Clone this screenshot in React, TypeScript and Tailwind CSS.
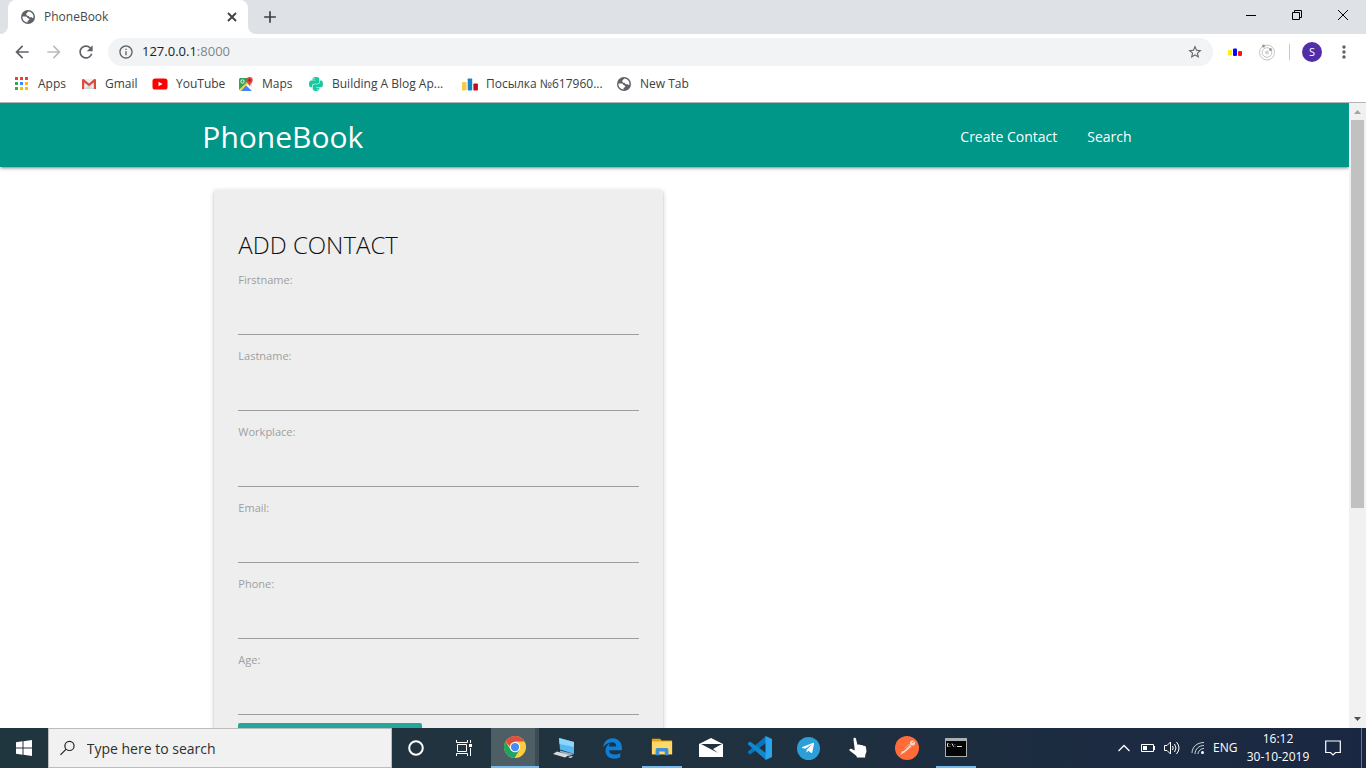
import React from "react";
import type { ReactNode } from "react";
import { FaPython, FaTelegramPlane, FaEdgeLegacy } from "react-icons/fa";
import { MdRefresh, MdArrowBack, MdArrowForward, MdStarBorder, MdInfoOutline, MdAdd, MdMoreVert } from "react-icons/md";

function Globe() {
  return (
    <svg viewBox="0 0 16 16" className="size-4 shrink-0" aria-hidden="true">
      <circle cx="8" cy="8" r="7" fill="#5f6368" />
      <path d="M8.300 2.600C7.600 3.600 6.300 4 6.300 5.300c0 1.200 1 1.500 1.900 1.500.9.100.7 1.500 1.700 1.500h1.300c.9 0 .9 1.100 2.200.6.5-3.500-1.900-6.100-5.100-6.300z" fill="#fff" />
      <path d="M2.500 7.600h3.300c1.500 0 1.200 1.800 2.600 1.900 1.200.1 1.100 1.300.4 1.700-.8.4-1.300.6-1.300 1.400v.9C4.300 13.300 2.200 10.900 2.500 7.600z" fill="#fff" />
    </svg>
  );
}

function AppsIcon() {
  const colors = ["#ea4335", "#ea4335", "#ea4335", "#34a853", "#4285f4", "#fbbc05", "#34a853", "#fbbc05", "#fbbc05"];
  return (
    <svg viewBox="0 0 16 16" className="size-4 shrink-0" aria-hidden="true">
      {colors.map((c, i) => (
        <rect key={i} x={1 + (i % 3) * 5} y={1 + Math.floor(i / 3) * 5} width="3" height="3" fill={c} />
      ))}
    </svg>
  );
}

function GmailIcon() {
  return (
    <svg viewBox="0 0 16 16" className="size-4 shrink-0" aria-hidden="true">
      <path d="M2 3h12v10H2z" fill="#eceff1" />
      <path d="M3.500 13 8 9l4.500 4z" fill="#d5d9dc" />
      <path d="M1 4.200C1 3 2.200 2.700 3 3.300l5 4.200 5-4.200c.8-.6 2-.3 2 .9V13h-2.200V6.400L8 10.300 3.200 6.400V13H1z" fill="#dd4b3e" />
    </svg>
  );
}

function YouTubeIcon() {
  return (
    <svg viewBox="0 0 16 16" className="size-4 shrink-0" aria-hidden="true">
      <rect x="0.500" y="2.500" width="15" height="11" rx="2.600" fill="#f00" />
      <path d="M6.500 5.700v4.600l4-2.300z" fill="#fff" />
    </svg>
  );
}

function MapsIcon() {
  return (
    <svg viewBox="0 0 16 16" className="size-4 shrink-0" aria-hidden="true">
      <rect x="1" y="2" width="13" height="13" rx="1.500" fill="#dfe3e6" />
      <path d="M1 3.500Q1 2 2.500 2H9v5L1 14z" fill="#34a05a" />
      <path d="M1 14 9.500 5.500l1.500 1.500L3 15z" fill="#fdd243" />
      <path d="M3 15l5-5.500L14 15z" fill="#4285f4" />
      <path d="M10.500 8.500 14 12v2.500L8 9z" fill="#fff" />
      <circle cx="4.500" cy="5.500" r="1.700" fill="none" stroke="#fff" strokeWidth="0.900" />
      <path d="M11.500 10.500c-.2-2.200-3-3.600-3-6.300a3 3.200 0 0 1 6.200 0c0 2.700-3 4.100-3.200 6.300z" fill="#ea4335" />
      <circle cx="11.600" cy="4.200" r="1.100" fill="#8c2219" />
    </svg>
  );
}

function BarsIcon({ small = false }: { small?: boolean }) {
  return small ? (
    <svg viewBox="0 0 16 16" className="size-4" aria-hidden="true">
      <rect x="1" y="6" width="4" height="5.500" rx="1" fill="#fff000" />
      <rect x="6" y="4.500" width="4" height="7.500" rx="1" fill="#0808ff" />
      <rect x="11" y="7" width="4" height="5" rx="1" fill="#ff1414" />
    </svg>
  ) : (
    <svg viewBox="0 0 16 16" className="size-4 shrink-0" aria-hidden="true">
      <rect x="0" y="6" width="4.500" height="8.500" rx="0.800" fill="#f9c846" />
      <rect x="5.700" y="2.500" width="4.500" height="12" rx="0.800" fill="#1483cc" />
      <rect x="11.400" y="7.500" width="4.500" height="7" rx="0.800" fill="#c00d1e" />
    </svg>
  );
}

function OrbitIcon() {
  return (
    <svg viewBox="0 0 18 18" className="size-[18px]" aria-hidden="true" fill="none" stroke="#c4c4c4">
      <circle cx="9" cy="9.500" r="7.500" />
      <circle cx="9" cy="9.500" r="4.800" />
      <circle cx="9" cy="9.500" r="2" fill="#d4d4d4" stroke="none" />
      <circle cx="5.500" cy="3" r="1.500" fill="#999" stroke="none" />
      <circle cx="12.500" cy="6.500" r="1.500" fill="#999" stroke="none" />
    </svg>
  );
}

function TabStrip() {
  return (
    <header className="flex h-[34px] shrink-0 items-stretch bg-[#dee1e6] pl-2">
      <div className="relative flex w-60 items-center rounded-t-lg bg-white pr-2 pl-3">
        <svg viewBox="0 0 8 8" className="absolute bottom-0 -left-2 size-2" aria-hidden="true">
          <path d="M8 0v8H0a8 8 0 0 0 8-8z" fill="#fff" />
        </svg>
        <svg viewBox="0 0 8 8" className="absolute -right-2 bottom-0 size-2" aria-hidden="true">
          <path d="M0 0v8h8a8 8 0 0 1-8-8z" fill="#fff" />
        </svg>
        <Globe />
        <span className="ml-2 flex-1 text-[12px] text-[#45494d]">PhoneBook</span>
        <button aria-label="Close tab">
          <svg viewBox="0 0 16 16" className="size-4" fill="none" stroke="#3c4043" strokeWidth="1.800">
            <path d="m4 4 8 8M12 4l-8 8" />
          </svg>
        </button>
      </div>
      <button aria-label="New tab" className="ml-3 text-[#3c4043]">
        <MdAdd className="size-5" />
      </button>
      <div className="ml-auto flex items-center pb-1">
        <button aria-label="Minimize" className="flex w-[46px] justify-center">
          <svg viewBox="0 0 10 10" className="size-2.5"><path d="M0 5.500h10" stroke="#000" /></svg>
        </button>
        <button aria-label="Restore" className="flex w-[46px] justify-center">
          <svg viewBox="0 0 10 10" className="size-2.5" fill="none" stroke="#000">
            <path d="M.5 2.500h7v7h-7zM2.500 2.500v-2h7v7h-2" />
          </svg>
        </button>
        <button aria-label="Close window" className="flex w-[46px] justify-center">
          <svg viewBox="0 0 10 10" className="size-2.5"><path d="M0 0l10 10M10 0 0 10" stroke="#000" /></svg>
        </button>
      </div>
    </header>
  );
}

function Toolbar() {
  return (
    <div className="flex h-9 shrink-0 items-center bg-white pr-3 pl-3 text-[#5f6368]">
      <button aria-label="Back"><MdArrowBack className="size-5" /></button>
      <button aria-label="Forward" className="ml-3 text-[#babcbe]"><MdArrowForward className="size-5" /></button>
      <button aria-label="Reload" className="ml-3"><MdRefresh className="size-5" /></button>
      <div className="ml-3 flex h-7 flex-1 items-center rounded-full bg-[#f1f3f4] pr-2.5 pl-2.5">
        <MdInfoOutline className="size-4" />
        <a href="http://127.0.0.1:8000" className="ml-2 flex-1 text-[13px] text-[#202124]">
          127.0.0.1<span className="text-[#80868b]">:8000</span>
        </a>
        <button aria-label="Bookmark this page"><MdStarBorder className="size-4" /></button>
      </div>
      <div className="flex items-center pl-3.5">
        <button aria-label="Analytics extension"><BarsIcon small /></button>
        <button aria-label="Orbit extension" className="ml-[15px]"><OrbitIcon /></button>
        <span className="ml-[13px] h-4 w-px bg-[#c6c8ca]" />
        <button aria-label="Profile" className="ml-3 flex size-5 items-center justify-center rounded-full bg-[#512da8] text-[11px] text-white">
          S
        </button>
        <button aria-label="Menu" className="ml-3"><MdMoreVert className="size-5" /></button>
      </div>
    </div>
  );
}

function Bookmark({ icon, label, className }: { icon: ReactNode; label: string; className: string }) {
  return (
    <a href="#" className={`flex items-center gap-2 whitespace-nowrap ${className}`}>
      {icon}
      <span>{label}</span>
    </a>
  );
}

function BookmarksBar() {
  return (
    <nav aria-label="Bookmarks" className="flex h-[33px] shrink-0 items-center border-b border-[#b6b4b6] bg-white pb-1 pl-3.5 text-[12px] text-[#3c4043]">
      <Bookmark className="w-[67px]" icon={<AppsIcon />} label="Apps" />
      <Bookmark className="w-[71px]" icon={<GmailIcon />} label="Gmail" />
      <Bookmark className="w-[86px]" icon={<YouTubeIcon />} label="YouTube" />
      <Bookmark className="w-[70px]" icon={<MapsIcon />} label="Maps" />
      <Bookmark className="w-[154px]" icon={<FaPython className="size-4 shrink-0 text-[#19c8a0]" />} label="Building A Blog Ap..." />
      <Bookmark className="w-[154px]" icon={<BarsIcon />} label="Посылка №617960..." />
      <Bookmark className="w-24" icon={<Globe />} label="New Tab" />
    </nav>
  );
}

const fields = [
  { id: "firstname", label: "Firstname:", type: "text" },
  { id: "lastname", label: "Lastname:", type: "text" },
  { id: "workplace", label: "Workplace:", type: "text" },
  { id: "email", label: "Email:", type: "email" },
  { id: "phone", label: "Phone:", type: "tel" },
  { id: "age", label: "Age:", type: "text" },
];

function Page() {
  return (
    <div className="min-w-0 flex-1 overflow-hidden bg-white">
      <nav className="h-16 bg-[#009688] text-white shadow-[0_2px_2px_0_rgba(0,0,0,0.14),0_3px_1px_-2px_rgba(0,0,0,0.12),0_1px_5px_0_rgba(0,0,0,0.2)]">
        <div className="mx-auto flex h-full w-[70%] items-center justify-between pt-0.5">
          <a href="#" className="text-[30px]">PhoneBook</a>
          <div className="flex text-[14px] font-medium">
            <a href="#" className="px-[15px]">Create Contact</a>
            <a href="#" className="px-[15px]">Search</a>
          </div>
        </div>
      </nav>
      <main className="mx-auto w-[70%] px-3 pt-[23px]">
        <form className="w-[449px] rounded-xs bg-[#eee] p-6 shadow-[0_2px_2px_0_rgba(0,0,0,0.14),0_3px_1px_-2px_rgba(0,0,0,0.12),0_1px_5px_0_rgba(0,0,0,0.2)]">
          <h1 className="mt-4 mb-3 text-[24px] leading-[29px] font-[350] text-[#101010]">ADD CONTACT</h1>
          {fields.map((f) => (
            <div key={f.id} className="mb-3 flex flex-col last-of-type:mb-2">
              <label htmlFor={f.id} className="text-[11px] leading-[18px] text-[#9e9e9e]">{f.label}</label>
              <input id={f.id} type={f.type} className="h-[46px] border-b border-[#9e9e9e] bg-transparent text-[16px] outline-none" />
            </div>
          ))}
          <button type="submit" aria-label="Submit" className="block h-9 w-[184px] rounded-xs bg-[#26a69a] shadow-md" />
        </form>
      </main>
    </div>
  );
}

function Scrollbar() {
  return (
    <div aria-hidden="true" className="flex w-[17px] shrink-0 flex-col items-center bg-[#f1f1f1]">
      <svg viewBox="0 0 17 17" className="size-[17px] shrink-0"><path d="M5 11h7L8.500 7z" fill="#a3a3a3" /></svg>
      <div className="h-[388px] w-[13px] bg-[#c1c1c1]" />
      <svg viewBox="0 0 17 17" className="mt-auto size-[17px] shrink-0"><path d="M5 6h7l-3.500 4z" fill="#505050" /></svg>
    </div>
  );
}

function TaskButton({ label, children, width = "w-[49px]", state = "" }: { label: string; children: ReactNode; width?: string; state?: string }) {
  return (
    <button aria-label={label} className={`flex h-10 items-center justify-center ${width}`}>
      <span className={`flex h-full items-center justify-center ${state || "w-10"}`}>{children}</span>
    </button>
  );
}

function Taskbar() {
  return (
    <footer className="flex h-10 shrink-0 items-center bg-linear-to-r from-[#20363e] via-[#20323f] to-[#1a2742] text-white">
      <button aria-label="Start" className="flex h-full w-12 items-center justify-center">
        <svg viewBox="0 0 16 16" className="size-4" fill="#fff">
          <path d="M0 2.200 6.500 1.300V7.500H0zM7.500 1.200 16 0v7.500H7.500zM0 8.500h6.500v6.200L0 13.800zM7.500 8.500H16V16l-8.500-1.200z" />
        </svg>
      </button>
      <label className="flex h-full w-[344px] items-center border border-[#bcbcbc] bg-[#f1f1f1] pl-[11px] text-[#222]">
        <svg viewBox="0 0 16 16" className="size-4" fill="none" stroke="#222" strokeWidth="1.300" aria-hidden="true">
          <circle cx="10.300" cy="5.700" r="5" />
          <path d="M6.700 9.300.5 15.500" />
        </svg>
        <input aria-label="Search Windows" placeholder="Type here to search" className="ml-3 w-full bg-transparent text-[14px] outline-none placeholder:text-[#2f2f2f]" />
      </label>
      <div className="flex">
        <TaskButton label="Cortana" width="w-12">
          <svg viewBox="0 0 18 18" className="size-[18px]"><circle cx="9" cy="9" r="6.800" fill="none" stroke="#fff" strokeWidth="2" /></svg>
        </TaskButton>
        <TaskButton label="Task view" width="w-12">
          <svg viewBox="0 0 18 18" className="size-[18px]" fill="none" stroke="#fff">
            <path d="M2.500 5.500h9v7h-9zM1.500 1v2.500h11V1M1.500 17v-2.500h11V17M15.500 1v3M15.500 9v8" />
            <path d="M14 5h3v3h-3z" fill="#fff" stroke="none" />
          </svg>
        </TaskButton>
        <TaskButton label="Chrome" width="w-[51px] pl-[3px]" state="w-12 border-b-2 border-[#76b9ed] bg-[#4d5e65] bg-linear-to-r from-[#4d5e65] from-92% to-[#3c4c55] to-92%">
          <svg viewBox="0 0 24 24" className="size-[22px]">
            <circle cx="12" cy="12" r="12" fill="#ffcd40" />
            <path d="M1.600 6A12 12 0 0 1 22.400 6H12l-5 6z" fill="#de4f42" />
            <path d="M1.600 6A12 12 0 0 0 11.500 24L17 15H7z" fill="#1fa362" />
            <circle cx="12" cy="12" r="5.600" fill="#fff" />
            <circle cx="12" cy="12" r="4.500" fill="#4b8bf5" />
          </svg>
        </TaskButton>
        <TaskButton label="Remote desktop">
          <svg viewBox="0 0 24 24" className="size-6">
            <path d="m7 2 15 4v12L8 13.500z" fill="#53b9f0" />
            <path d="m7 2 15 4v5L7.500 8z" fill="#8dd5fa" />
            <path d="M8 14.500 22 18l-5 2-9-4z" fill="#9aaab4" />
            <path d="M5 15.500 17 19l-4 2.500L1 18z" fill="#d6dce0" />
            <path d="m16 21 4-1 1 1-3 1z" fill="#d6dce0" />
          </svg>
        </TaskButton>
        <TaskButton label="Edge"><FaEdgeLegacy className="size-[21px] text-[#0b7fda]" /></TaskButton>
        <TaskButton label="File Explorer" state="w-10 border-b-2 border-[#76b9ed]">
          <svg viewBox="0 0 24 24" className="size-[22px]">
            <path d="M1 3h9l1.500 2H23v15H1z" fill="#e5a50f" />
            <path d="M1 6h22v14H1z" fill="#ffd868" />
            <path d="M5 21v-6q0-2 2-2h10q2 0 2 2v6h-4v-4H9v4z" fill="#3c91d8" />
          </svg>
        </TaskButton>
        <TaskButton label="Mail">
          <svg viewBox="0 0 24 20" className="h-5 w-6">
            <path d="M0 6 12 0l12 6v13H0z" fill="#fff" />
            <path d="M2 6h21l-9 5 5 4z" fill="#20323f" />
          </svg>
        </TaskButton>
        <TaskButton label="Visual Studio Code">
          <svg viewBox="0 0 24 24" className="size-6">
            <path d="M18 0 0 15.500V17l2 1.500L18 7z" fill="#0876bd" />
            <path d="M18 24 0 8.500V7l2-1.500L18 17z" fill="#1187cf" />
            <path d="m17.500 0 6.500 3v18l-6.500 3z" fill="#29a5ef" />
          </svg>
        </TaskButton>
        <TaskButton label="Telegram">
          <span className="flex size-[23px] items-center justify-center rounded-full bg-[#2a9fd8]">
            <FaTelegramPlane className="mr-0.5 size-[14px]" />
          </span>
        </TaskButton>
        <TaskButton label="Pointer">
          <svg viewBox="0 0 24 24" className="size-6" fill="#fff">
            <path d="M7.500 3.200C7.300 1.500 9.600 1.200 10 2.800l1.400 6 1.200-.2c.7-.2 1.300 0 1.700.5l1.200-.1c.7-.1 1.300.2 1.600.8h1.100c1 .1 1.600.7 1.800 1.700l.5 4-1.300 3.800v2.200H11l-.7-1.700-6.500-5c-1.100-1 .2-2.500 1.400-2l3.600 1.800z" />
          </svg>
        </TaskButton>
        <TaskButton label="Postman">
          <svg viewBox="0 0 24 24" className="size-6">
            <circle cx="12" cy="12" r="12" fill="#ff6c37" />
            <path d="M5 19 7 15.500 14 8l2.500 2.500-7 6z" fill="#ffd5c5" />
            <path d="m8 15 6.500-6" stroke="#df5422" />
            <circle cx="17.500" cy="7" r="2.600" fill="#ffd5c5" />
            <path d="m17.500 7 1.500-1.500" stroke="#df5422" />
          </svg>
        </TaskButton>
        <TaskButton label="Command Prompt" state="w-10 border-b-2 border-[#76b9ed]">
          <svg viewBox="0 0 22 19" className="h-[19px] w-[22px]">
            <path d="M0 0h22v19H0z" fill="#a9b0b3" />
            <path d="M1 3h20v15H1z" fill="#050505" />
            <path d="M3.500 5.500h-1v3h1M5 6v.5M5 8v.5M7 5.500l1.500 3M10 6v.5M10 8v.5M12 8.500h5" fill="none" stroke="#ddd" />
          </svg>
        </TaskButton>
      </div>
      <div className="ml-auto flex h-full items-center">
        <button aria-label="Show hidden icons">
          <svg viewBox="0 0 12 12" className="size-3" fill="none" stroke="#fff" strokeWidth="1.300"><path d="m.5 9 5.500-5.500L11.500 9" /></svg>
        </button>
        <svg viewBox="0 0 16 16" className="ml-2.5 size-4" fill="none" stroke="#fff" role="img" aria-label="Battery">
          <path d="M1.500 4.500h12v7h-12zM14.500 6v4" /><path d="M3 6h4v4H3z" fill="#fff" stroke="none" />
        </svg>
        <svg viewBox="0 0 18 18" className="ml-[7px] size-[18px]" fill="none" stroke="#fff" role="img" aria-label="Volume">
          <path d="M1.500 6.500h2.500l3.500-3.500v12l-3.500-3.500H1.500zM9.500 7q1.500 2 0 4M11.500 5q3 4 0 8M13.500 3q5 6 0 12" />
        </svg>
        <svg viewBox="0 0 14 14" className="ml-2.5 size-3.5" fill="none" stroke="#fff" role="img" aria-label="Wi-Fi">
          <path d="M1 12C1 6 6 1.500 13 1.500M4 13c0-5 4-8.500 9-8.500M7 13c0-3 3-5.500 6-5.500" opacity=".8" />
          <circle cx="11.500" cy="11.500" r="1.500" fill="#fff" stroke="none" />
        </svg>
        <span className="ml-2 w-6 text-[12px]">ENG</span>
        <button className="w-[82px] text-center text-[12px] leading-[18px]">
          <span className="block">16:12</span>
          <span className="block">30-10-2019</span>
        </button>
        <button aria-label="Notifications" className="ml-1.5">
          <svg viewBox="0 0 16 16" className="size-4" fill="none" stroke="#fff" strokeWidth="1.200">
            <path d="M.7 1h14.600v11.500H10.500L8 15l-2.500-2.500H.7z" />
          </svg>
        </button>
        <span className="ml-5 h-full w-px bg-[#697386]" />
        <span className="w-1" />
      </div>
    </footer>
  );
}

export default function App() {
  return (
    <div className="flex h-screen flex-col overflow-hidden bg-white font-['Open_Sans','Noto_Sans',sans-serif]">
      <TabStrip />
      <Toolbar />
      <BookmarksBar />
      <div className="flex min-h-0 flex-1">
        <Page />
        <Scrollbar />
      </div>
      <Taskbar />
    </div>
  );
}
